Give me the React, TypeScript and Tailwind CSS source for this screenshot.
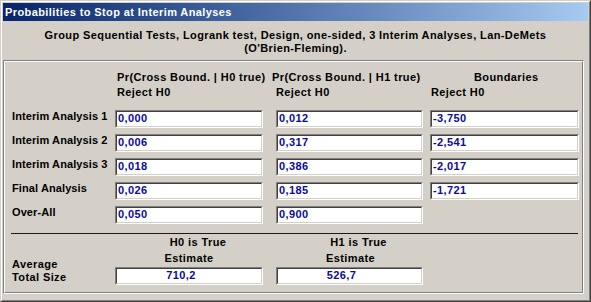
/**
 * Probabilities to Stop at Interim Analyses
 * Classic Win2k style result dialog
 */

const rows = [
  { label: 'Interim Analysis 1', h0: '0,000', h1: '0,012', bound: '-3,750' },
  { label: 'Interim Analysis 2', h0: '0,006', h1: '0,317', bound: '-2,541' },
  { label: 'Interim Analysis 3', h0: '0,018', h1: '0,386', bound: '-2,017' },
  { label: 'Final Analysis', h0: '0,026', h1: '0,185', bound: '-1,721' },
  { label: 'Over-All', h0: '0,050', h1: '0,900', bound: null },
]

function Field({ value, width, center }: { value: string; width: string; center?: boolean }) {
  return (
    <div className={`${width} h-[18px] border border-t-[#808080] border-l-[#808080] border-b-white border-r-white`}>
      <div
        className={`h-full bg-white border border-t-[#404040] border-l-[#404040] border-b-[#d4d0c8] border-r-[#d4d0c8] text-[#0a0a9c] leading-[13px] ${
          center ? 'text-center pr-[16px]' : 'pl-[1px]'
        }`}
      >
        {value}
      </div>
    </div>
  )
}

export default function App() {
  return (
    <div
      className="w-[591px] h-[302px] flex border border-t-[#d4d0c8] border-l-[#d4d0c8] border-r-[#404040] border-b-[#404040] text-[11px] font-bold tracking-[0.4px] text-black"
      style={{ fontFamily: '"Liberation Sans", Arial, sans-serif' }}
    >
      <div className="flex-1 flex border border-t-white border-l-white border-r-[#808080] border-b-[#808080]">
        <div className="flex-1 flex flex-col p-px bg-[#d4d0c8]">
          {/* Title bar */}
          <div className="h-[18px] pl-[2px] leading-[18px] text-white bg-gradient-to-r from-[#0a246a] to-[#a6caf0]">
            Probabilities to Stop at Interim Analyses
          </div>

          {/* Description */}
          <div className="pt-[8px] pb-[5px] text-center leading-[13px]">
            <div>Group Sequential Tests, Logrank test, Design, one-sided, 3 Interim Analyses, Lan-DeMets</div>
            <div>(O'Brien-Fleming).</div>
          </div>

          {/* Group box */}
          <div className="w-[581px] h-[234px] flex border border-t-[#808080] border-l-[#808080] border-r-white border-b-white">
            <div className="flex-1 flex flex-col pl-[7px] border border-t-white border-l-white border-r-[#808080] border-b-[#808080] leading-[13px]">
              {/* Headers */}
              <div className="flex pt-[9px]">
                <div className="w-[105px]" />
                <div className="w-[155px] whitespace-nowrap">Pr(Cross Bound. | H0 true)</div>
                <div className="w-[202px] whitespace-nowrap">Pr(Cross Bound. | H1 true)</div>
                <div>Boundaries</div>
              </div>
              <div className="flex pt-[2px]">
                <div className="w-[105px]" />
                <div className="w-[159px]">Reject H0</div>
                <div className="w-[155px]">Reject H0</div>
                <div>Reject H0</div>
              </div>

              {/* Rows */}
              <div className="flex flex-col gap-[6px] mt-[11px]">
                {rows.map((r) => (
                  <div key={r.label} className="flex">
                    <div className="w-[103px] whitespace-nowrap tracking-[0.1px]">{r.label}</div>
                    <Field value={r.h0} width="w-[148px]" />
                    <div className="w-[13px]" />
                    <Field value={r.h1} width="w-[147px]" />
                    <div className="w-[7px]" />
                    {r.bound && <Field value={r.bound} width="w-[149px]" />}
                  </div>
                ))}
              </div>

              {/* Separator */}
              <div className="mt-[9px] ml-[-1px] w-[567px] h-px bg-[#1a1a1a]" />

              {/* Average total size */}
              <div className="flex mt-[2px]">
                <div className="w-[103px] flex flex-col justify-end pb-[1px]">
                  <div>Average</div>
                  <div>Total Size</div>
                </div>
                <div className="w-[148px] flex flex-col">
                  <div className="text-center pl-[18px]">H0 is True</div>
                  <div className="text-center pt-[3px] pb-[2px]">Estimate</div>
                  <Field value="710,2" width="w-[148px]" center />
                </div>
                <div className="w-[13px]" />
                <div className="w-[147px] flex flex-col">
                  <div className="text-center pl-[18px]">H1 is True</div>
                  <div className="text-center pt-[3px] pb-[2px] pl-[2px]">Estimate</div>
                  <Field value="526,7" width="w-[147px]" center />
                </div>
              </div>
            </div>
          </div>
        </div>
      </div>
    </div>
  )
}
